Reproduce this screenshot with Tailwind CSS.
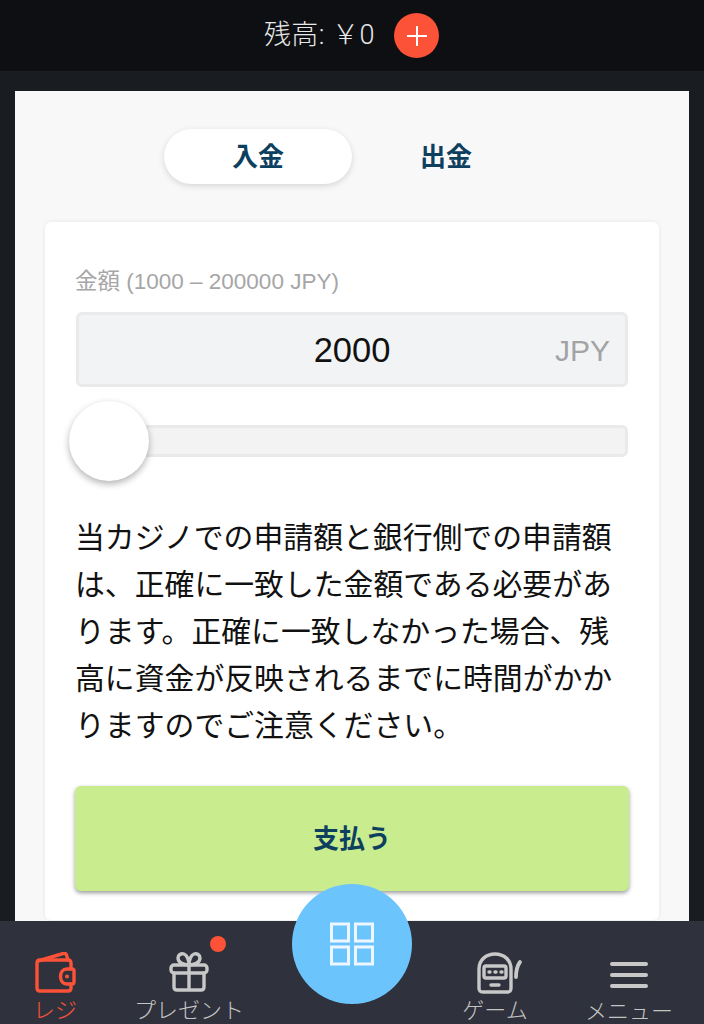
<!DOCTYPE html>
<html><head><meta charset="utf-8"><script src="https://cdn.jsdelivr.net/npm/@tailwindcss/browser@4"></script></head>
<body class="m-0 font-['Liberation_Sans','Noto_Sans_CJK_JP',sans-serif]">
<div class="relative w-[704px] h-[1024px] overflow-hidden bg-[#191c21] flex flex-col">
<header class="h-[71px] shrink-0 bg-[#0d0f12] flex items-center justify-center gap-[19px] text-[#e8e8e8] text-[27px] font-['Roboto','Noto_Sans_CJK_JP',sans-serif] font-light pr-[1px]">
<span class="tracking-[0.5px]">残高: ￥0</span>
<span class="w-[45px] h-[45px] rounded-full bg-[#fb5238] flex items-center justify-center"><svg width="22" height="22" viewBox="0 0 22 22"><path d="M11 1v20M1 11h20" stroke="#fff" stroke-width="2"/></svg></span>
</header>
<main class="mx-[15px] mt-[20px] bg-[#f8f8f8] flex-1 px-[30px]">
<div class="flex justify-center pt-[38px]">
<div class="w-[188px] h-[55px] pt-[2px] rounded-full bg-white shadow-[0_2px_6px_rgba(0,0,0,0.14)] flex items-center justify-center font-bold text-[26px] text-[#0d3f5f]">入金</div>
<div class="w-[188px] h-[55px] pt-[2px] flex items-center justify-center font-bold text-[26px] text-[#0d3f5f]">出金</div>
</div>
<section class="mt-[38px] bg-white rounded-[6px] shadow-[0_0_4px_rgba(0,0,0,0.08)] h-[698px] px-[30px] pt-[46px]">
<div class="text-[22.5px] leading-[28px] text-[#a6a6a6]">金額 (1000 – 200000 JPY)</div>
<div class="relative mt-[16px] mx-[1px] h-[75px] pt-[2px] bg-[#f2f3f4] border-[3px] border-[#e9eaeb] rounded-[6px] flex items-center justify-center text-[34.5px] text-[#111]">2000<span class="absolute right-[15px] text-[#a3a3a7] text-[30px]">JPY</span></div>
<div class="relative mt-[38px] mx-[1px] h-[32px] bg-[#f3f3f4] border-[3px] border-[#e9eaeb] rounded-[6px]"><div class="absolute left-[-10px] top-[-27px] w-[80px] h-[80px] rounded-full bg-white shadow-[0_3px_7px_rgba(0,0,0,0.3)]"></div></div>
<p class="mt-[55px] text-[29.85px] leading-[47px] text-[#111] font-['Noto_Sans_CJK_JP',sans-serif]">当カジノでの申請額と銀行側での申請額は、正確に一致した金額である必要があります。正確に一致しなかった場合、残高に資金が反映されるまでに時間がかかりますのでご注意ください。</p>
<div class="mt-[39px] pt-[2px] h-[105px] rounded-[6px] bg-[#c9ec8f] shadow-[0_2px_4px_rgba(0,0,0,0.4)] flex items-center justify-center font-bold text-[26px] text-[#0d3f5f]">支払う</div>
</section>
</main>
<nav class="absolute left-0 right-0 bottom-0 h-[103px] bg-[#2f313c] grid grid-cols-[110px_158px_168px_118px_150px] text-[#c4c4c4] text-[22px] leading-[26px] font-['Noto_Sans_CJK_JP',sans-serif] font-light">
<a class="flex flex-col items-center pt-[31px] text-[#fb5238]">
<svg width="42" height="42" viewBox="0 0 42 42" fill="none" stroke="#fb5238" stroke-width="3.4" stroke-linejoin="round" stroke-linecap="round"><path d="M37 17v-6c0-2-1-3-3-3H6c-2 0-3 1-3 3v25c0 2 1 3 3 3h28c2 0 3-1 3-3v-4"/><path d="M4 9 29 1.500c2-.5 3 0 3.500 1.500l1.500 5"/><path d="M33 17h5c1.500 0 2 .8 2 2v11c0 1.200-.5 2-2 2h-5c-4 0-6.500-3.200-6.500-7.500S29 17 33 17z"/><circle cx="33" cy="24.500" r="2" fill="#fb5238" stroke="none"/></svg>
<span class="mt-[1px]">レジ</span>
</a>
<a class="relative flex flex-col items-center pt-[31px]">
<svg width="40" height="40" viewBox="0 0 40 40" fill="none" stroke="#c8c8c8" stroke-width="3.4" stroke-linejoin="round" stroke-linecap="round"><rect x="2" y="13" width="36" height="8" rx="3"/><path d="M5 21v14c0 2 1 3 3 3h24c2 0 3-1 3-3V21M20 13v25"/><path d="M20 13C15 13 9 11 9 6c0-3 3-5 6-4 3 1 5 6 5 11zM20 13c5 0 11-2 11-7 0-3-3-5-6-4-3 1-5 6-5 11z"/></svg>
<span class="mt-[3px]">プレゼント</span>
<span class="absolute left-[100px] top-[15px] w-[16px] h-[16px] rounded-full bg-[#fb5238]"></span>
</a>
<div></div>
<a class="flex flex-col items-center pt-[31px]">
<svg width="46" height="43" viewBox="0 0 46 43" fill="none" stroke="#c8c8c8" stroke-width="3.4" stroke-linejoin="round" stroke-linecap="round" class="ml-[9px]"><path d="M2 36V17C2 8 9 2 18 2s16 6 16 15v19c0 3-1 4-4 4H6c-3 0-4-1-4-4z"/><rect x="7" y="14" width="22" height="12" rx="2"/><path d="M12 20h1M18 20h1M24 20h1M14 33h8"/><path d="M39 25c0-6 1-11 4-15" stroke-width="3.800"/></svg>
<span>ゲーム</span>
</a>
<a class="flex flex-col items-center pt-[40px]">
<svg width="38" height="28" viewBox="0 0 38 28" fill="none" stroke="#c8c8c8" stroke-width="4" stroke-linecap="round"><path d="M2 3h34M2 14h34M2 25h34"/></svg>
<span class="mt-[7px]">メニュー</span>
</a>
</nav>
<button class="absolute left-[292px] top-[884px] w-[120px] h-[120px] rounded-full bg-[#6cc4fd] flex items-center justify-center"><svg width="44" height="44" viewBox="0 0 44 44" fill="none" stroke="#eef7ff" stroke-width="3"><rect x="1.500" y="2" width="17" height="17"/><rect x="25.500" y="2" width="17" height="17"/><rect x="1.500" y="25" width="17" height="17"/><rect x="25.500" y="25" width="17" height="17"/></svg></button>
</div>
</body></html>
